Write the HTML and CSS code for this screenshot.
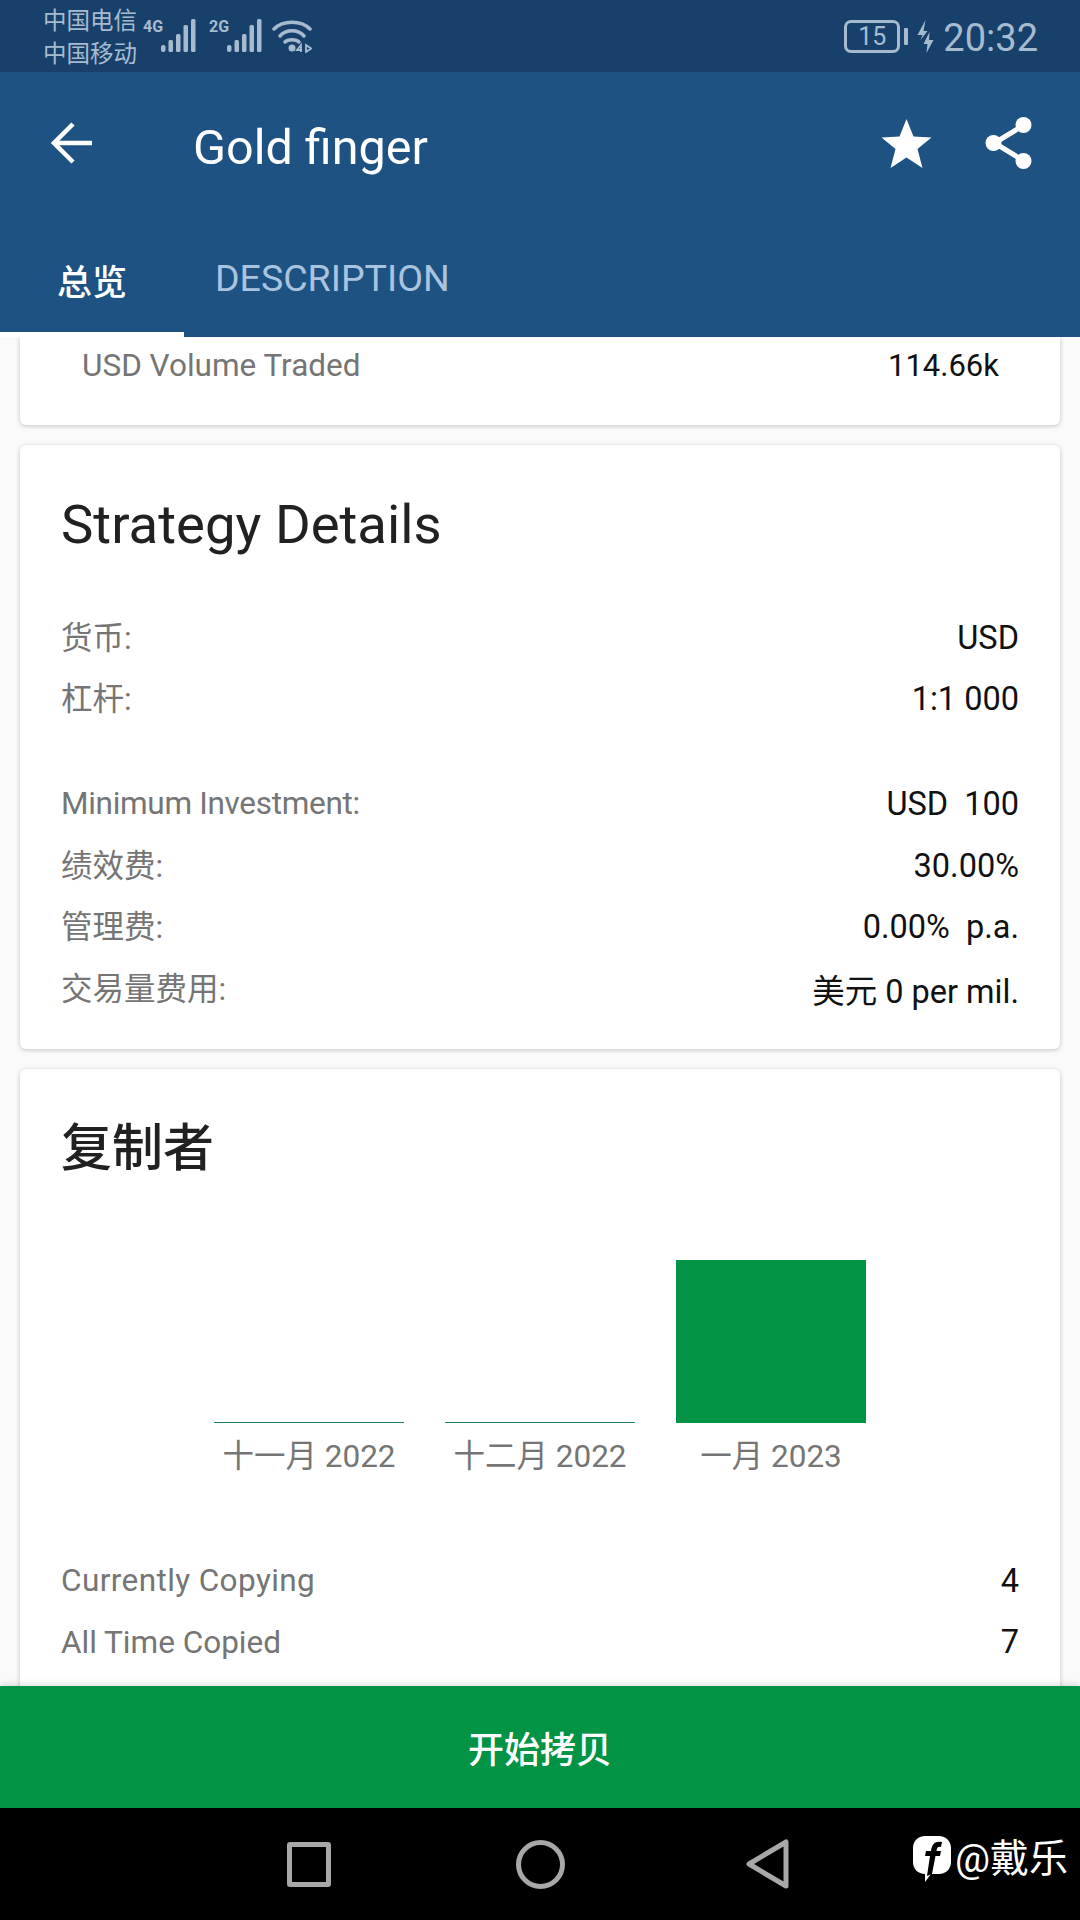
FILE: index.html
```html
<!DOCTYPE html>
<html lang="zh">
<head>
<meta charset="utf-8">
<title>Gold finger</title>
<link rel="stylesheet" href="styles.css">
</head>
<body>
<div class="screen">
  <div class="statusbar">
    <div class="status-left">
      <div class="carriers"><span>中国电信</span><span>中国移动</span></div>
      <div class="signal"><span class="net">4G</span>
        <svg class="bars" viewBox="0 0 35 34"><g fill="#a7bbcf"><rect x="0" y="26" width="4.500" height="7" rx="2"/><rect x="7.500" y="21" width="4.500" height="12" rx="1.500"/><rect x="15" y="15" width="4.500" height="18" rx="1.500"/><rect x="22.500" y="6" width="4.500" height="27" rx="1.500"/><rect x="30" y="0" width="4.500" height="33" rx="1.500"/></g></svg>
      </div>
      <div class="signal"><span class="net">2G</span>
        <svg class="bars" viewBox="0 0 35 34"><g fill="#a7bbcf"><rect x="0" y="26" width="4.500" height="7" rx="2"/><rect x="7.500" y="21" width="4.500" height="12" rx="1.500"/><rect x="15" y="15" width="4.500" height="18" rx="1.500"/><rect x="22.500" y="6" width="4.500" height="27" rx="1.500"/><rect x="30" y="0" width="4.500" height="33" rx="1.500"/></g></svg>
      </div>
      <svg class="wifi" viewBox="0 0 40 34"><g fill="none" stroke="#a7bbcf" stroke-width="3.500" stroke-linecap="round"><path d="M2 10C11 1 29 1 38 10"/><path d="M8 17C14 10 26 10 32 17"/><path d="M13 23C16 20 24 20 27 23"/></g><circle cx="20" cy="29" r="3.500" fill="#a7bbcf"/><path d="M29 33V26L25 31H30M34 26L39 29.500L34 33Z" fill="none" stroke="#a7bbcf" stroke-width="1.800"/></svg>
    </div>
    <div class="status-right">
      <span class="battery">15</span><span class="nub"></span>
      <svg class="bolt" viewBox="0 0 16 33"><path d="M8 0L0 15H5L3 20L10 11H6ZM12 12L6 24H10L9 33L16 20H11.500Z" fill="#a7bbcf"/></svg>
      <span class="clock">20:32</span>
    </div>
  </div>
  <header class="appbar">
    <div class="toolbar">
      <svg class="back" viewBox="0 0 40 42"><path d="M40 21H3M21 2L2 21L21 40" fill="none" stroke="#fff" stroke-width="4.500"/></svg>
      <h1 class="title">Gold finger</h1>
      <svg class="star" viewBox="0 0 50 49"><path d="M25 0L32 17.500L50 18.500L36 30L41 49L25 38.500L9 49L14 30L0 18.500L18 17.500Z" fill="#fff"/></svg>
      <svg class="share" viewBox="0 0 46 52"><path d="M9 26L37 9M9 26L37 43" stroke="#fff" stroke-width="5" fill="none"/><circle cx="8" cy="26" r="8" fill="#fff"/><circle cx="38" cy="8" r="8" fill="#fff"/><circle cx="38" cy="44" r="8" fill="#fff"/></svg>
    </div>
    <nav class="tabs">
      <span class="tab active">总览</span>
      <span class="tab">DESCRIPTION</span>
    </nav>
  </header>
  <main class="content">
    <section class="card card-top">
      <div class="row row-top"><span class="label">USD Volume Traded</span><span class="value">114.66k</span></div>
    </section>
    <section class="card card-details">
      <h2 class="heading">Strategy Details</h2>
      <div class="group">
        <div class="row"><span class="label label-cjk">货币:</span><span class="value">USD</span></div>
        <div class="row"><span class="label label-cjk">杠杆:</span><span class="value">1:1 000</span></div>
      </div>
      <div class="group">
        <div class="row"><span class="label label-tight">Minimum Investment:</span><span class="value">USD&nbsp; 100</span></div>
        <div class="row"><span class="label label-cjk">绩效费:</span><span class="value">30.00%</span></div>
        <div class="row"><span class="label label-cjk">管理费:</span><span class="value">0.00%&nbsp; p.a.</span></div>
        <div class="row"><span class="label label-cjk">交易量费用:</span><span class="value">美元 0 per mil.</span></div>
      </div>
    </section>
    <section class="card card-copiers">
      <h2 class="heading heading-cjk">复制者</h2>
      <div class="chart">
        <div class="col"><div class="plot"><div class="bar bar-empty"></div></div><span class="tick">十一月 2022</span></div>
        <div class="col"><div class="plot"><div class="bar bar-empty"></div></div><span class="tick">十二月 2022</span></div>
        <div class="col"><div class="plot"><div class="bar bar-full"></div></div><span class="tick">一月 2023</span></div>
      </div>
      <div class="group">
        <div class="row"><span class="label label-wide">Currently Copying</span><span class="value">4</span></div>
        <div class="row"><span class="label">All Time Copied</span><span class="value">7</span></div>
      </div>
    </section>
  </main>
  <button class="cta">开始拷贝</button>
  <footer class="navbar">
    <span class="nav-square"></span>
    <span class="nav-circle"></span>
    <svg class="nav-back" viewBox="0 0 44 50"><path d="M40 3V47L3 25Z" fill="none" stroke="#a8a8a8" stroke-width="5" stroke-linejoin="round"/></svg>
    <div class="mark">
      <svg class="mark-logo" viewBox="0 0 38 46"><path d="M12 0H26C33 0 38 5 38 12V26C38 33 33 38 26 38H18L12 46V38C5 38 0 33 0 26V12C0 5 5 0 12 0Z" fill="#fff"/><path d="M14 40L17 20H12L13 15H18C19 8 22 5 29 6L28 11C25 10.500 24 11 23.500 15H28L27 20H22.500L19 38Z" fill="#000"/></svg>
      <span>@戴乐</span>
    </div>
  </footer>
</div>
</body>
</html>
```
FILE: styles.css
```css
* { box-sizing: border-box; margin: 0; padding: 0; }
html, body { width: 1080px; height: 1920px; overflow: hidden; }
body { font-family: Roboto, "Noto Sans CJK SC", sans-serif; background: #fafafa; }
.screen { width: 1080px; height: 1920px; display: flex; flex-direction: column; }

.statusbar { height: 72px; flex: none; background: #17416b; color: #a7bbcf; display: flex; justify-content: space-between; align-items: center; padding: 0 42px 0 43px; }
.status-left { display: flex; align-items: center; }
.carriers { display: flex; flex-direction: column; font-size: 23.500px; line-height: 33px; width: 100px; padding-top: 3px; }
.signal { display: flex; align-items: flex-start; height: 34px; margin-right: 13px; }
.net { font-family: "Roboto"; font-weight: 700; font-size: 16px; line-height: 16px; width: 18px; }
.bars { width: 35px; height: 34px; }
.wifi { width: 40px; height: 34px; margin-left: -3px; }
.status-right { display: flex; align-items: center; }
.battery { width: 56px; height: 33px; border: 3px solid #a7bbcf; border-radius: 7px; font-size: 25px; line-height: 27px; text-align: center; }
.nub { width: 4px; height: 17px; margin-left: 4px; background: #a7bbcf; border-radius: 1px; }
.bolt { width: 17px; height: 33px; margin-left: 9px; }
.clock { font-size: 38px; line-height: 44px; margin: 4px 0 0 9px; }

.appbar { height: 265px; flex: none; background: #1d5282; color: #fff; display: flex; flex-direction: column; }
.toolbar { height: 175px; flex: none; display: flex; align-items: center; padding: 0 48px 26px 51px; }
.back { width: 42px; height: 42px; margin-bottom: 7px; }
.title { font-size: 48.500px; font-weight: 400; margin: 2px 0 0 100px; flex: 1; }
.star { width: 51px; height: 49px; margin: 0 53px 7px 0; }
.share { width: 47px; height: 52px; margin-bottom: 7px; }
.tabs { flex: 1; display: flex; }
.tab { display: flex; align-items: center; height: 90px; padding: 0 26px 28px 31px; font-size: 37.500px; color: #aac4e0; }
.tab.active { width: 184px; padding: 0 0 21px 57px; height: 90px; color: #fff; font-weight: 500; font-size: 35px; border-bottom: 5px solid #fff; }

.content { flex: 1; min-height: 0; overflow: hidden; padding: 0 20px; display: flex; flex-direction: column; gap: 20px; }
.card { flex: none; background: #fff; border-radius: 6px; box-shadow: 0 1px 5px rgba(0,0,0,.22); padding: 0 41px; }
.card-top { height: 88px; border-radius: 0 0 6px 6px; padding: 0 61px 0 62px; }
.card-details { height: 604px; padding-top: 45px; }
.card-copiers { height: 700px; padding-top: 46px; }
.heading { font-size: 54.500px; font-weight: 400; color: #212121; line-height: 68px; }
.heading-cjk { font-size: 51px; font-weight: 500; }
.group { display: flex; flex-direction: column; }
.card-details .group { margin-top: 49px; }
.card-details .group + .group { margin-top: 43px; }
.row { display: flex; justify-content: space-between; align-items: center; height: 61.600px; font-size: 31.500px; }
.row-top { height: 56px; }
.label { color: #757575; }
.label-cjk { margin-bottom: 6px; }
.label-tight { letter-spacing: -.3px; }
.label-wide { letter-spacing: .4px; }
.value { color: #111; font-size: 32.500px; }
.row-top .value { font-size: 31px; }

.chart { display: flex; gap: 41px; margin: 0 0 0 153px; height: 367px; padding-top: 77px; }
.col { width: 190px; display: flex; flex-direction: column; align-items: center; }
.plot { height: 163px; flex: none; width: 100%; display: flex; align-items: flex-end; }
.bar { width: 100%; }
.bar-empty { height: 1px; background: #1f7f5a; }
.bar-full { height: 163px; background: #039345; }
.tick { font-size: 31.500px; color: #757575; line-height: 68px; }

.cta { flex: none; height: 122px; border: 0; background: #039345; color: #fff; font: 500 36px Roboto, "Noto Sans CJK SC", sans-serif; position: relative; box-shadow: 0 -2px 6px rgba(0,0,0,.12); }

.navbar { flex: none; height: 112px; background: #000; display: flex; align-items: center; position: relative; padding: 0 0 0 287px; }
.nav-square { width: 44px; height: 45px; border: 5px solid #a8a8a8; border-radius: 3px; }
.nav-circle { width: 49px; height: 49px; border: 5px solid #a8a8a8; border-radius: 50%; margin-left: 185px; }
.nav-back { width: 44px; height: 50px; margin-left: 181px; }
.mark { position: absolute; left: 913px; top: 28px; display: flex; align-items: center; color: #fff; font-size: 39px; line-height: 46px; }
.mark-logo { width: 38px; height: 46px; margin-right: 4px; }
```
